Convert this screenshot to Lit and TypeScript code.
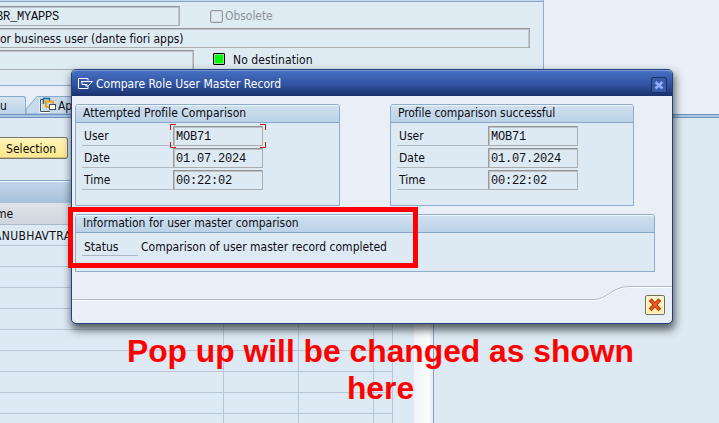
import { LitElement, html, css } from "lit";
import { customElement, property } from "lit/decorators.js";

const rows = Array.from({ length: 10 }, (_, i) => i);

@customElement("sap-panel")
class SapPanel extends LitElement {
  @property() heading = "";
  static styles = css`
    :host { display: flex; flex-direction: column; box-sizing: border-box; border: 1px solid #8eaccb; border-radius: 3px 3px 0 0; background: #deeaf3; }
    .head { box-sizing: border-box; height: 17px; flex: none; border-top: 1px solid #eef5fb; border-bottom: 0; background: linear-gradient(#cfe0ef, #bbd2e7); box-shadow: 0 1px #86a7ca; padding-left: 7px; line-height: 14px; border-radius: 2px 2px 0 0; white-space: nowrap; }
    .head span { letter-spacing: var(--head-spacing, -0.15px); }
  `;
  render() {
    return html`<div class="head"><span>${this.heading}</span></div><slot></slot>`;
  }
}

@customElement("sap-fields")
class SapFields extends LitElement {
  @property({ type: Boolean }) focused = false;
  static styles = css`
    :host { display: flex; flex-direction: column; gap: 2px; margin: 4px 0 0 6px; }
    .row { display: flex; height: 20px; align-items: flex-end; }
    .label { box-sizing: border-box; width: 91px; height: 20px; border-bottom: 1px solid #b0b7bf; padding-left: 2px; line-height: 21px; letter-spacing: 0; }
    .field { position: relative; box-sizing: border-box; width: 90px; height: 20px; border: 1px solid #aaacae; border-top-color: #929496; border-left-color: #999b9d; box-shadow: inset 1px 1px #bcc1c5; border-radius: 1px; background: #deeaf3; padding-left: 2px; font: 12px/20px "Liberation Mono", monospace; letter-spacing: -0.2px; }
    svg { position: absolute; left: -4px; top: -3px; }
  `;
  render() {
    const data = [["User", "MOB71"], ["Date", "01.07.2024"], ["Time", "00:22:02"]];
    return data.map(
      ([label, value], i) => html`<div class="row">
        <div class="label">${label}</div>
        <div class="field">${value}${this.focused && i === 0
          ? html`<svg width="96" height="24" fill="none" stroke="#b01218"><path d="M.5 6V.5H6M90 .5h5.500V6M.5 18v5.500H6M90 23.500h5.500V18" /></svg>`
          : ""}</div>
      </div>`
    );
  }
}

@customElement("app-root")
class AppRoot extends LitElement {
  static styles = css`
    :host { display: block; position: relative; width: 719px; height: 423px; overflow: hidden; background: #e8eff7; color: #0c0c12; font: 12px/16px "DejaVu Sans Condensed", "DejaVu Sans", sans-serif; font-stretch: condensed; letter-spacing: -0.05px; white-space: nowrap; }
    .top { box-sizing: border-box; width: 544px; height: 86px; background: #dfebf3; border-right: 1px solid #91aecd; border-bottom: 1px solid #91aecd; display: flex; flex-direction: column; }
    .strip { height: 1px; background: #c3d7ea; border-bottom: 1px solid #86a5c9; margin-bottom: 4px; }
    .line { display: flex; height: 20px; margin-bottom: 2px; }
    .input { box-sizing: border-box; height: 20px; border: 1px solid #aaacae; border-top-color: #929496; border-left: 0; box-shadow: inset -1px 1px #bfc5ca; line-height: 19px; }
    .w1 { width: 180px; font: 12px/20px "Liberation Mono", monospace; letter-spacing: -0.2px; }
    .w1 span { margin-left: -4px; }
    .w2 { width: 530px; line-height: 20px; letter-spacing: -0.05px; }
    .w3 { width: 194px; }
    .box { box-sizing: border-box; width: 13px; height: 13px; border: 1px solid #95989c; border-radius: 2px; margin: 4px 2px 0 30px; box-shadow: inset 0 0 0 1px #d3d8dd; }
    .gray { color: #8b929a; line-height: 21px; }
    .green { box-sizing: border-box; width: 12px; height: 12px; border: 1px solid #000; border-radius: 1px; box-shadow: inset 0 0 0 1px #91df92; background: #00fa0a; margin: 3px 8px 0 19px; }
    .dest { line-height: 21px; letter-spacing: 0.08px; }
    .tabs { display: flex; align-items: flex-end; height: 28px; }
    .tab { box-sizing: border-box; height: 18px; width: 26px; border: 1px solid #89a9c9; border-left: 0; border-bottom: 0; border-radius: 0 3px 0 0; background: linear-gradient(#d6e5f2, #bdd3e7); line-height: 19px; }
    .tab2 { display: flex; width: 110px; height: 18px; }
    .tab2 .txt { margin-left: -52px; line-height: 20px; }
    .rule { height: 4px; box-sizing: border-box; background: #a7c4e2; border-top: 1px solid #6d94c2; border-bottom: 1px solid #7295bd; }
    .lower { display: flex; height: 305px; }
    .left { width: 414px; background: #deeaf3; display: flex; flex-direction: column; }
    .scroll { width: 16px; background: linear-gradient(90deg, #f2f4f6, #fdfdfd); margin-right: 3px; }
    .right { flex: 1; border-left: 1px solid #829fbd; background: #deeaf3; }
    .selwrap { flex: none; height: 63px; box-sizing: border-box; padding-top: 19px; border-bottom: 1px solid #83a5ca; }
    .sel { box-sizing: border-box; width: 68px; height: 22px; border: 1px solid #77735f; border-left: 0; border-radius: 0 3px 3px 0; box-shadow: inset -1px 1px #fff6cd, inset 0 -1px #cfc389; background: linear-gradient(#fff3b7, #ffe78b); padding-left: 6px; line-height: 22px; letter-spacing: 0.05px; }
    .grid { flex: 1; min-height: 0; width: 393px; display: flex; flex-direction: column; border-top: 1px solid #f0f7fd; }
    .ghead { height: 21px; background: linear-gradient(#c2d6e9, #a6c0db); flex: none; }
    .colhead { box-sizing: border-box; height: 22px; border-bottom: 1px solid #a9b7c7; background: linear-gradient(#e0e4e9, #cfd5dc); line-height: 23px; flex: none; }
    .colhead span { margin-left: -4px; }
    .body { flex: 1; min-height: 0; overflow: hidden; display: grid; grid-template-columns: 224px 75px 75px 19px; grid-auto-rows: 21px; }
    .cell { box-sizing: border-box; border-right: 1px solid #b8c7d6; border-bottom: 1px solid #b8c7d6; line-height: 22px; }
    .cell span { margin-left: -6px; letter-spacing: 0.35px; }
    .dialog { position: absolute; left: 71px; top: 69px; width: 602px; height: 255px; box-sizing: border-box; border: 1px solid #233f7c; border-radius: 5px; background: #e8eff7; box-shadow: 1px 5px 9px 1px rgba(20, 26, 34, 0.68); display: flex; flex-direction: column; }
    .title { flex: none; height: 26px; display: flex; align-items: center; box-sizing: border-box; border-top: 1px solid #7d9bd2; border-radius: 4px 4px 0 0; background: linear-gradient(#466fc3, #3052a0 55%, #19316b); color: #fff; padding: 0 5px 0 6px; }
    .title span { flex: 1; margin-left: 3px; letter-spacing: 0.02px; line-height: 24px; }
    .close { box-sizing: border-box; width: 16px; height: 16px; border: 1px solid #1b3267; border-radius: 2px; background: #375ba7; margin-top: 2px; }
    .panels { margin: 8px 0 0 3px; display: flex; gap: 50px; }
    .p1 { width: 265px; height: 102px; --head-spacing: 0.03px; }
    .p2 { width: 244px; height: 102px; --head-spacing: -0.07px; }
    .p3 { width: 580px; height: 58px; margin: 8px 0 0 3px; --head-spacing: 0; }
    .status { display: flex; margin: 6px 0 0 6px; line-height: 18px; letter-spacing: 0.01px; }
    .slabel { box-sizing: border-box; width: 56px; height: 18px; border-bottom: 1px solid #a9b7c6; padding-left: 2px; margin-right: 3px; }
    .foot { flex: 1; position: relative; margin-top: 11px; display: flex; justify-content: flex-end; }
    .curve { position: absolute; left: 0; top: 0; }
    .cancel { position: relative; box-sizing: border-box; width: 20px; height: 20px; margin: 12px 7px 0 0; border: 1px solid #716e5c; border-radius: 2px; background: linear-gradient(#fff6c9, #ffec9e); box-shadow: inset 0 0 0 1px #fffbe0; }
    .cancel svg, .close svg { display: block; }
    .mark { position: absolute; box-sizing: border-box; left: 68px; top: 207px; width: 350px; height: 61px; border: 5px solid #f00; }
    .note { position: absolute; left: 120px; top: 333px; width: 521px; text-align: center; white-space: normal; color: #f00; font: bold 31.800px/37px "Liberation Sans", Arial, sans-serif; letter-spacing: 0; }
  `;

  render() {
    return html`
      <div class="top">
        <div class="strip"></div>
        <div class="line">
          <div class="input w1"><span>BR_MYAPPS</span></div>
          <div class="box"></div>
          <div class="gray">Obsolete</div>
        </div>
        <div class="line"><div class="input w2">or business user (dante fiori apps)</div></div>
        <div class="line">
          <div class="input w3"></div>
          <div class="green"></div>
          <div class="dest">No destination</div>
        </div>
      </div>
      <div class="tabs">
        <div class="tab">u</div>
        <div class="tab2">
          <svg width="84" height="18" viewBox="26 0 84 18">
            <path d="M26 13 37 .5H112V18H26Z" fill="#c7daeb" stroke="#89a9c9" />
            <path d="M40.500 3v13H50" fill="none" stroke="#fff" stroke-width="2" />
            <path d="M43 3.500H40.500V15.500H50" fill="none" stroke="#555" />
            <path d="M43.500 8V2.500h6V5" fill="none" stroke="#17679a" stroke-width="1.500" />
            <path d="M46 11V5.500h7V8M46 11h3" fill="none" stroke="#f2a10c" stroke-width="2" />
            <rect x="49.500" y="8.500" width="6" height="5" fill="#fff" stroke="#4c4c55" />
          </svg>
          <div class="txt">Ap</div>
        </div>
      </div>
      <div class="rule"></div>
      <div class="lower">
        <div class="left">
          <div class="selwrap"><div class="sel">Selection</div></div>
          <div class="grid">
            <div class="ghead"></div>
            <div class="colhead"><span>me</span></div>
            <div class="body">
              ${rows.map((i) => html`<div class="cell">${i === 0 ? html`<span>ANUBHAVTRA</span>` : ""}</div>
                <div class="cell"></div><div class="cell"></div><div class="cell"></div>`)}
            </div>
          </div>
        </div>
        <div class="scroll"></div>
        <div class="right"></div>
      </div>

      <div class="dialog">
        <div class="title">
          <svg width="15" height="12" fill="none" stroke="#fff"><path d="M10 2.500V.5H.5v10H10V8M3 3.500h11.500L10 8H7.500L9 6.500H4V3.500" /></svg>
          <span>Compare Role User Master Record</span>
          <div class="close">
            <svg width="14" height="14"><path d="M3.500 4 10.500 10.500M10.500 4 3.500 10.500" stroke="#8eafff" stroke-width="2.600" /></svg>
          </div>
        </div>
        <div class="panels">
          <sap-panel class="p1" heading="Attempted Profile Comparison"><sap-fields focused></sap-fields></sap-panel>
          <sap-panel class="p2" heading="Profile comparison successful"><sap-fields></sap-fields></sap-panel>
        </div>
        <sap-panel class="p3" heading="Information for user master comparison">
          <div class="status"><div class="slabel">Status</div><div>Comparison of user master record completed</div></div>
        </sap-panel>
        <div class="foot">
          <svg class="curve" width="600" height="20" fill="none">
            <path d="M0 17.500H522C535 17.500 540 4.500 557 4.500H600" stroke="#fff" />
            <path d="M0 16.500H522C535 16.500 540 3.500 557 3.500H600" stroke="#adbccb" />
          </svg>
          <div class="cancel">
            <svg width="18" height="18" stroke-linecap="square"><path d="M5.500 5 12.500 12.500M12.500 5 5.500 12.500" stroke="#a93b12" stroke-width="4" /><path d="M5.500 5 12.500 12.500M12.500 5 5.500 12.500" stroke="#ee5a1c" stroke-width="2" /></svg>
          </div>
        </div>
      </div>
      <div class="mark"></div>
      <div class="note">Pop up will be changed as shown here</div>
    `;
  }
}
